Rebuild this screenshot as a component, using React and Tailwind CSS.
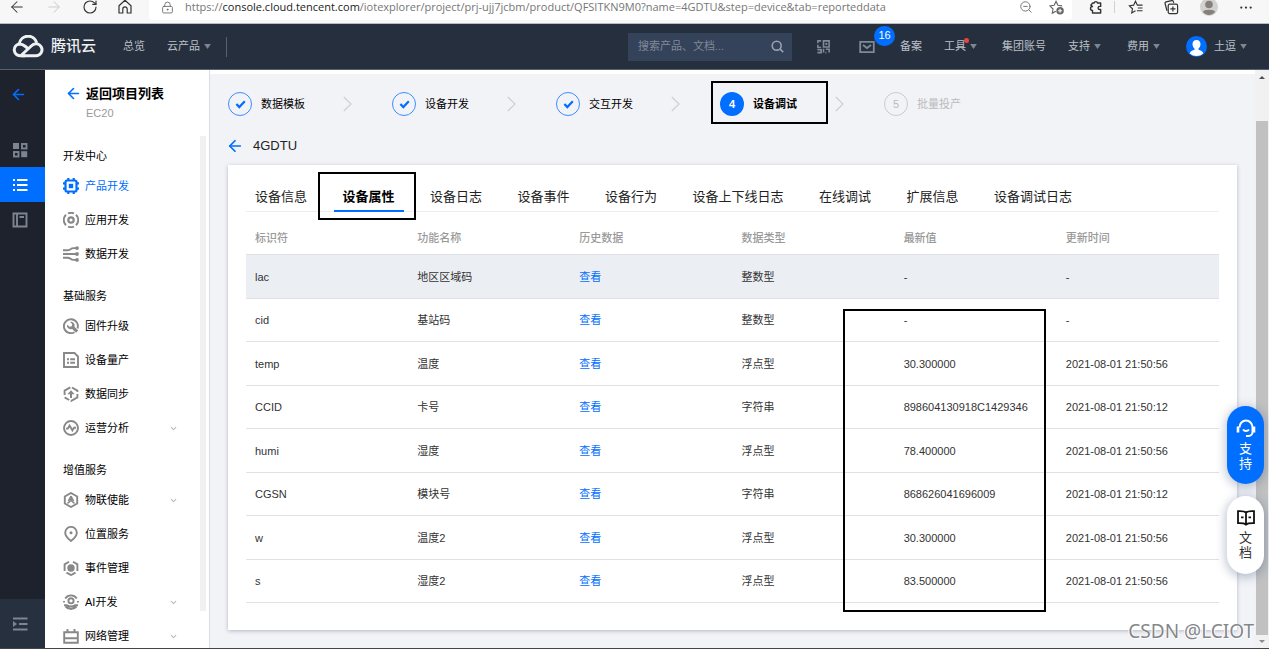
import React from "react";
import {
  ArrowLeft,
  ArrowRight,
  ChevronDown,
  RotateCw,
  LockKeyhole,
  ZoomOut,
} from "lucide-react";

function Svg({ size = 16, className = "", children, ...rest }) {
  return (
    <svg
      width={size}
      height={size}
      viewBox="0 0 16 16"
      fill="none"
      stroke="currentColor"
      strokeWidth="1.9"
      className={"shrink-0 " + className}
      aria-hidden="true"
      {...rest}
    >
      {children}
    </svg>
  );
}

const Dot = ({ x, y, r = 1.3 }) => <circle cx={x} cy={y} r={r} fill="currentColor" stroke="none" />;

const sideIcons = {
  chip: (
    <>
      <rect x="2.5" y="2.5" width="11" height="11" rx="1.5" strokeWidth="2.2" />
      <rect x="5.800" y="5.800" width="4.400" height="4.400" fill="currentColor" stroke="none" />
      <path d="M5.3 0v2M10.7 0v2M5.3 14v2M10.7 14v2M0 5.3h2M0 10.7h2M14 5.3h2M14 10.7h2" strokeWidth="2.200" />
    </>
  ),
  app: (
    <>
      <circle cx="8" cy="8" r="2.700" strokeWidth="2.200" />
      <path d="M5 1.500a7.200 7.200 0 0 1 6 0M5 14.500a7.200 7.200 0 0 0 6 0M3 2.800a7.200 7.200 0 0 0 0 10.400M13 2.800a7.200 7.200 0 0 1 0 10.400" />
    </>
  ),
  flow: (
    <>
      <path d="M0 4.300h4.500c3 0 3-2.200 6-2.200H14M0 8h14M0 11.700h4.500c3 0 3 2.200 6 2.200H14" />
      <Dot x={14} y={2.1} r={1.9} />
      <Dot x={14} y={8} r={1.9} />
      <Dot x={14} y={13.9} r={1.9} />
    </>
  ),
  wrench: (
    <>
      <path d="M11.500 14.200A7 7 0 1 1 14.500 10.500" />
      <path d="M7 3.900a3.800 3.800 0 0 1 4.500 4.900l3.700 3.800-2.200 2.200-3.900-3.800a3.800 3.800 0 0 1-5-4.500l2.400 2.200 2.300-.4.400-2.200z" fill="currentColor" stroke="none" />
    </>
  ),
  batch: (
    <>
      <path d="M1 1h10.500L15 4.500V15H1z" />
      <path d="M4 7.200h2M7.200 7.200H12M4 10.800h2M7.200 10.800H12" />
    </>
  ),
  sync: (
    <>
      <path d="M1.600 9V4.600L8 1l6.400 3.600V6M14.400 8v3.400L8 15l-6.400-3.600" strokeDasharray="11 1.800" />
      <path d="M8 12V6" strokeWidth="2" />
      <path d="M4.400 8.200 8 4.200l3.600 4z" fill="currentColor" stroke="none" />
    </>
  ),
  pulse: (
    <>
      <circle cx="8" cy="8" r="7" />
      <path d="M3 8.600h1.800l1.800-3 2.800 4.800 1.600-2.600h2" />
    </>
  ),
  hexA: (
    <>
      <path d="M8 1l6.200 3.500v7L8 15l-6.200-3.500v-7z" />
      <path d="M8 4v4.500l-3.500 2.800M8 8.500l3.500 2.800M8 4.200l-2.600 5M8 4.200l2.600 5" strokeWidth="1.500" />
    </>
  ),
  pin: (
    <>
      <path d="M8 15S2.200 10.500 2.200 6.700a5.800 5.800 0 0 1 11.600 0C13.800 10.500 8 15 8 15z" />
      <Dot x={8} y={6.700} r={1.500} />
    </>
  ),
  event: (
    <>
      <circle cx="8" cy="8" r="3.700" fill="currentColor" stroke="none" />
      <path d="M6 1.800 1.600 4.400V11M10 1.800l4.400 2.600V11M3.500 12.600 8 15l4.500-2.400" />
    </>
  ),
  ai: (
    <>
      <path d="M2.200 4.500a7 7 0 0 1 11.600 0M1 7v1.500M15 7v1.500M1 11.200h3c2 1.800 6 1.800 8 0h3M2.500 12.500c3 3.300 8 3.300 11 0" />
      <circle cx="8" cy="6.800" r="2.600" />
    </>
  ),
  net: (
    <>
      <path d="M1.200 4.200h13.600v10.600H1.200zM1.200 10.300h13.600M4.500 1v3M11.500 1v3" />
    </>
  ),
};

const groups = [
  {
    title: "开发中心",
    items: [
      { icon: "chip", label: "产品开发", active: true },
      { icon: "app", label: "应用开发" },
      { icon: "flow", label: "数据开发" },
    ],
  },
  {
    title: "基础服务",
    items: [
      { icon: "wrench", label: "固件升级" },
      { icon: "batch", label: "设备量产" },
      { icon: "sync", label: "数据同步" },
      { icon: "pulse", label: "运营分析", more: true },
    ],
  },
  {
    title: "增值服务",
    items: [
      { icon: "hexA", label: "物联使能", more: true },
      { icon: "pin", label: "位置服务" },
      { icon: "event", label: "事件管理" },
      { icon: "ai", label: "AI开发", more: true },
      { icon: "net", label: "网络管理", more: true },
    ],
  },
];

const tabs = [
  "设备信息",
  "设备属性",
  "设备日志",
  "设备事件",
  "设备行为",
  "设备上下线日志",
  "在线调试",
  "扩展信息",
  "设备调试日志",
];

const steps = ["数据模板", "设备开发", "交互开发", "设备调试", "批量投产"];

const columns = ["标识符", "功能名称", "历史数据", "数据类型", "最新值", "更新时间"];

const rows = [
  ["lac", "地区区域码", "整数型", "-", "-"],
  ["cid", "基站码", "整数型", "-", "-"],
  ["temp", "温度", "浮点型", "30.300000", "2021-08-01 21:50:56"],
  ["CCID", "卡号", "字符串", "898604130918C1429346", "2021-08-01 21:50:12"],
  ["humi", "湿度", "浮点型", "78.400000", "2021-08-01 21:50:56"],
  ["CGSN", "模块号", "字符串", "868626041696009", "2021-08-01 21:50:12"],
  ["w", "温度2", "浮点型", "30.300000", "2021-08-01 21:50:56"],
  ["s", "湿度2", "浮点型", "83.500000", "2021-08-01 21:50:56"],
];

function Caret() {
  return (
    <svg width="7" height="5" viewBox="0 0 8 6" className="shrink-0 text-[#7f868f]" aria-hidden="true">
      <path d="M0 0h8L4 6z" fill="currentColor" />
    </svg>
  );
}

function BrowserBar() {
  return (
    <div className="flex h-6 shrink-0 items-start border-b border-[#b9bec2] bg-[#f7f7f7] text-[#333]">
      <div className="flex h-[14px] items-center gap-[19px] pl-2">
        <button aria-label="后退"><ArrowLeft size={18} strokeWidth={1.4} /></button>
        <button aria-label="前进" className="text-[#cfcfcf]"><ArrowRight size={18} strokeWidth={1.4} /></button>
        <button aria-label="刷新"><RotateCw size={16} strokeWidth={1.700} /></button>
        <button aria-label="主页">
          <Svg size={16} strokeWidth="1.200">
            <path d="M2 6.700 8 1.200l6 5.500V14h-3.800v-4a2.200 2.200 0 0 0-4.400 0v4H2z" />
          </Svg>
        </button>
      </div>
      <div className="ml-4 flex h-5 min-w-0 flex-1 items-start rounded-b bg-white">
        <div className="flex h-[14px] w-full min-w-0 items-center pl-3 pr-2">
          <LockKeyhole size={13} strokeWidth={1.7} className="shrink-0 text-[#707070]" />
          <a
            href="#address"
            className="ml-[11px] truncate font-['Open_Sans','Noto_Sans',sans-serif] text-[11px] leading-[14px] text-[#767676]"
          >
            https://<span className="text-[#1c1c1c]">console.cloud.tencent.com</span>
            /iotexplorer/project/prj-ujj7jcbm/product/QFSITKN9M0?name=4GDTU&amp;step=device&amp;tab=reporteddata
          </a>
          <div className="ml-auto flex shrink-0 items-center gap-4">
            <button aria-label="缩小" className="text-[#777]"><ZoomOut size={14} strokeWidth={1.7} /></button>
            <button aria-label="收藏" className="text-[#666]">
              <Svg size={15} strokeWidth="1.2">
                <path d="M7.500 12 3.500 14l.8-4.400L1 6.400l4.500-.7 2-4.200 2 4.200 4.500.6" />
                <circle cx="11.800" cy="11.500" r="4" fill="currentColor" stroke="none" />
                <path d="M11.800 9.300v4.400M9.600 11.500H14" stroke="#fff" />
              </Svg>
            </button>
          </div>
        </div>
      </div>
      <div className="flex h-[14px] items-center pl-4 pr-4">
        <button aria-label="扩展">
          <Svg size={15} strokeWidth="1.500">
            <path d="M5 3.200h1.500a1.900 1.900 0 0 1 3.700 0h3.300v3.600h-1a1.700 1.700 0 0 0 0 3.400h1v3.600H4.800v-2.600a2.100 2.100 0 1 1 0-4.200L3 5.500z" strokeLinejoin="round" />
          </Svg>
        </button>
        <span className="ml-[11px] h-3 w-px bg-[#d0d0d0]" />
        <button aria-label="收藏夹" className="ml-[13px]">
          <Svg size={15} strokeWidth="1.2">
            <path d="M8 11.500 4 13.800l.8-4.500L1.500 6.200 6 5.500l2-4.200 2 4.200h5.500M10.500 8.500h5M9.500 11.500h6" />
          </Svg>
        </button>
        <button aria-label="集锦" className="ml-[21px]">
          <Svg size={15} strokeWidth="1.300">
            <path d="M3.200 11.500 1.200 4a1.500 1.500 0 0 1 1-2l6-1.400a1.500 1.500 0 0 1 1.800 1.200l.3 1.200" />
            <rect x="4.500" y="4.500" width="10" height="10" rx="1.500" />
            <path d="M9.500 6.800v5.400M6.800 9.500h5.400" />
          </Svg>
        </button>
        <button aria-label="用户" className="ml-[21px]">
          <svg width="18" height="18" viewBox="0 0 18 18" aria-hidden="true">
            <circle cx="9" cy="9" r="9" fill="#d3d1ce" />
            <circle cx="9" cy="6.500" r="3.800" fill="#85807b" />
            <path d="M3 14c0-3 12-3 12 0-3 4-9 4-12 0z" fill="#85807b" />
          </svg>
        </button>
        <button aria-label="更多" className="ml-5">
          <svg width="15" height="15" viewBox="0 0 16 16" fill="currentColor" aria-hidden="true">
            <circle cx="3.500" cy="8" r="1.200" />
            <circle cx="8.500" cy="8" r="1.200" />
            <circle cx="13.500" cy="8" r="1.200" />
          </svg>
        </button>
      </div>
    </div>
  );
}

function Header() {
  return (
    <header className="flex h-[46px] shrink-0 items-center border-b border-[#59616c] bg-[#262f3e] pl-3 pr-[22px] text-[11px] text-[#bbc0c7]">
      <a href="#home" className="flex items-center gap-[7px] text-[15px] font-medium text-[#eef0f2]">
        <svg width="32" height="24" viewBox="0 0 32 24" fill="none" stroke="currentColor" strokeWidth="3" aria-hidden="true">
          <path d="M13 20.800H8a6 6 0 0 1-.8-11.900 9 9 0 0 1 17.600-1" />
          <path d="M6 9c3-.5 5 .3 7.500 2.500l3 2.700" />
          <path d="M9.500 20.800H24a6 6 0 1 0-4.500-10L9 20.500" />
        </svg>
        腾讯云
      </a>
      <nav className="ml-[27px] flex items-center gap-[22px]">
        <a href="#overview">总览</a>
        <button className="flex items-center gap-1">云产品 <Caret /></button>
      </nav>
      <span className="ml-[15px] h-5 w-px bg-[#566070]" />
      <div className="ml-auto flex items-center">
        <label className="flex h-7 w-[164px] items-center bg-[#34425a] px-2">
          <input
            type="search"
            aria-label="搜索"
            placeholder="搜索产品、文档..."
            className="min-w-0 flex-1 bg-transparent pl-[2px] text-[11px] outline-none placeholder:text-[#808a98]"
          />
          <Svg size={13} className="text-[#98a1ad]" strokeWidth="2">
            <circle cx="7" cy="7" r="5.500" />
            <path d="m11 11 4 4" />
          </Svg>
        </label>
        <button aria-label="小程序" className="ml-6 text-[#7f8a99]">
          <Svg size={15} strokeWidth="1.700">
            <path d="M5.500 2H2v2.500M2 6v3h3.500M8 2h6v6.500H8zM1.500 11.500h4v3h-4M8 10.500v4M10.500 11h3.500v3.500M11 14.500h-1" />
            <Dot x={11} y={5.200} r={1.200} />
          </Svg>
        </button>
        <button aria-label="消息" className="relative ml-7 text-[#7f8a99]">
          <Svg size={16} strokeWidth="1.800">
            <path d="M1.200 2.800h13.600v10.400H1.200zM4 6l4 3 4-3" />
          </Svg>
          <span className="absolute -top-[13px] left-[15px] flex h-5 w-[21px] items-center justify-center rounded-full bg-[#006eff] text-[11px] text-white">
            16
          </span>
        </button>
        <a href="#beian" className="ml-[25px]">备案</a>
        <button className="relative ml-[22px] flex items-center gap-1">
          工具 <Caret />
          <span className="absolute left-5 top-0 h-[5px] w-[5px] rounded-full bg-[#e54545]" />
        </button>
        <a href="#account" className="ml-[25px]">集团账号</a>
        <button className="ml-[22px] flex items-center gap-1">支持 <Caret /></button>
        <button className="ml-[26px] flex items-center gap-1">费用 <Caret /></button>
        <button className="ml-[26px] flex items-center gap-1">
          <svg width="21" height="21" viewBox="0 0 21 21" className="mr-[3px]" aria-hidden="true">
            <circle cx="10.500" cy="10.500" r="10.500" fill="#006eff" />
            <path d="M10.500 4c-2.800 0-4 2-4 4.200 0 2 .9 3.300 2 4.200v1.400c-2 .8-4.300 1.200-4.800 3.800a10.500 10.500 0 0 0 13.600 0c-.5-2.600-2.800-3-4.800-3.800v-1.400c1.100-.9 2-2.200 2-4.200 0-2.200-1.200-4.200-4-4.200z" fill="#fff" />
          </svg>
          土逗 <Caret />
        </button>
      </div>
    </header>
  );
}

function Rail() {
  return (
    <aside className="flex w-[45px] shrink-0 flex-col bg-[#1e222d] text-[#7c8591]">
      <button aria-label="返回" className="flex h-12 items-center pl-[10px] text-[#006eff]">
        <ArrowLeft size={17} strokeWidth={2.3} />
      </button>
      <button aria-label="控制台" className="mt-[14px] flex h-[35px] items-center pl-3">
        <Svg size={16}>
          <rect x="1" y="1" width="6" height="6" fill="currentColor" stroke="none" />
          <rect x="10" y="2" width="4.500" height="4.500" />
          <rect x="2" y="10" width="4.500" height="4.500" />
          <rect x="9.200" y="9.200" width="6" height="6" fill="currentColor" stroke="none" />
        </Svg>
      </button>
      <button aria-label="列表" className="flex h-[35px] items-center bg-[#006eff] pl-3 text-white">
        <Svg size={16} strokeWidth="1.900">
          <path d="M1 3h2M5 3h10.500M1 8h2M5 8h10.500M1 13h2M5 13h10.500" />
        </Svg>
      </button>
      <button aria-label="文档" className="flex h-[35px] items-center pl-3">
        <Svg size={16}>
          <path d="M1.500 1.500h13v13h-13zM5 1.500v13M7.500 5H12" />
        </Svg>
      </button>
      <button aria-label="展开菜单" className="mt-auto flex h-[49px] items-center bg-[#27303f] pl-3">
        <Svg size={16}>
          <path d="M1 2.500h14.500M7 8h8.500M1 13.500h14.500" />
          <path d="M1 5v6l4-3z" fill="currentColor" stroke="none" />
        </Svg>
      </button>
    </aside>
  );
}

function Sidebar() {
  return (
    <aside className="flex w-[165px] shrink-0 flex-col border-r border-[#d9dce3] bg-white text-[11px] text-black">
      <div className="flex items-start gap-1 pl-5 pt-[15px]">
        <a href="#projects" aria-label="返回项目列表" className="text-[#006eff]">
          <ArrowLeft size={17} strokeWidth={2.300} />
        </a>
        <div>
          <h2 className="text-[13px] font-bold leading-[18px]">返回项目列表</h2>
          <p className="text-[11px] leading-[20px] text-[#999]">EC20</p>
        </div>
      </div>
      <div className="mt-[13px] flex min-h-0 flex-1">
        <nav className="flex min-w-0 flex-1 flex-col gap-3 overflow-hidden pl-[18px] pt-[7px]">
          {groups.map((g) => (
            <section key={g.title}>
              <h3 className="h-[26px] leading-[27px]">{g.title}</h3>
              <ul>
                {g.items.map((it) => (
                  <li key={it.label}>
                    <a
                      href={"#" + it.icon}
                      className={"flex h-[34px] items-center gap-[6px] pr-[22px] " + (it.active ? "text-[#006eff]" : "")}
                    >
                      <Svg size={16} className={it.active ? "text-[#006eff]" : "text-[#888]"}>
                        {sideIcons[it.icon]}
                      </Svg>
                      {it.label}
                      {it.more && <ChevronDown size={9} strokeWidth={3} className="ml-auto text-[#bbb]" />}
                    </a>
                  </li>
                ))}
              </ul>
            </section>
          ))}
        </nav>
        <div className="mb-[37px] mr-[3px] w-[6px] shrink-0 bg-[#f1f1f1]" />
      </div>
    </aside>
  );
}

function Steps() {
  return (
    <ol className="flex pt-[18px] text-[11px] text-black">
      {steps.map((label, i) => (
        <li key={label} className="flex items-center">
          <div className="relative flex items-center gap-[9px]">
            {i < 3 && (
              <span className="flex h-6 w-6 items-center justify-center rounded-full border border-[#3d8dff] text-[#006eff]">
                <svg width="11" height="11" viewBox="0 0 12 12" fill="none" stroke="currentColor" strokeWidth="2.400" aria-hidden="true">
                  <path d="m1.500 5.500 3.200 3.300 6-6.300" />
                </svg>
              </span>
            )}
            {i === 3 && (
              <span className="flex h-6 w-6 items-center justify-center rounded-full bg-[#006eff] font-bold text-white">4</span>
            )}
            {i === 4 && (
              <span className="flex h-6 w-6 items-center justify-center rounded-full border border-[#c9cbd0] text-[#bbb]">5</span>
            )}
            <span className={i === 3 ? "font-bold" : i === 4 ? "text-[#bbb]" : ""}>{label}</span>
            {i === 3 && (
              <span className="pointer-events-none absolute -bottom-2 -left-[9px] -right-[31px] -top-[11px] border-2 border-black" />
            )}
          </div>
          {i < 4 && (
            <svg width="9" height="16" viewBox="0 0 9 16" fill="none" stroke="#cfcfcf" strokeWidth="1.200" className="ml-[38px] mr-10" aria-hidden="true">
              <path d="m.8 1 7.200 7-7.200 7" />
            </svg>
          )}
        </li>
      ))}
    </ol>
  );
}

function Tabs() {
  return (
    <div className="border-b border-[#eceef1] pl-[9px]">
      <div role="tablist" className="flex max-w-[817px] justify-between text-[13px] text-[#222]">
        {tabs.map((t, i) => (
          <button
            key={t}
            role="tab"
            aria-selected={i === 1}
            className={"relative h-[30px] whitespace-nowrap pt-[2px] " + (i === 1 ? "font-bold text-black" : "")}
          >
            {t}
            {i === 1 && (
              <>
                <span className="absolute -bottom-px -left-2 -right-[9px] h-[2px] bg-[#006eff]" />
                <span className="pointer-events-none absolute -bottom-[9px] -left-6 -right-[21px] -top-[9px] border-2 border-black" />
              </>
            )}
          </button>
        ))}
      </div>
    </div>
  );
}

function DataTable() {
  return (
    <div className="relative">
      <table className="w-full table-fixed border-collapse text-left text-[11px] text-[#333]">
        <thead>
          <tr className="h-[42px] border-b border-[#dfe1e6] text-[#999]">
            {columns.map((c) => (
              <th key={c} className="pb-0 pl-[9px] pt-[10px] font-medium">{c}</th>
            ))}
          </tr>
        </thead>
        <tbody>
          {rows.map((r, i) => (
            <tr
              key={r[0]}
              className={
                "h-11 border-b border-[#dfe1e6] even:h-[43px] last:h-11 [&>td]:pb-0 [&>td]:pl-[9px] [&>td]:pt-[2px] " +
                (i === 0 ? "bg-[#ebeef2]" : "")
              }
            >
              <td>{r[0]}</td>
              <td>{r[1]}</td>
              <td><a href={"#" + r[0]} className="text-[#006eff]">查看</a></td>
              <td>{r[2]}</td>
              <td>{r[3]}</td>
              <td>{r[4]}</td>
            </tr>
          ))}
        </tbody>
      </table>
      <span className="pointer-events-none absolute -bottom-[9px] left-[597px] top-[97px] w-[203px] border-2 border-black" />
    </div>
  );
}

function PageScrollbar() {
  return (
    <div className="flex w-[14px] shrink-0 flex-col items-center bg-[#f1f1f1]">
      <svg width="14" height="14" viewBox="0 0 14 14" aria-hidden="true"><path d="M4 9h6L7 6z" fill="#505050" /></svg>
      <div className="mt-[37px] w-3 flex-1 bg-[#c1c1c1]" />
      <svg width="14" height="13" viewBox="0 0 14 13" aria-hidden="true"><path d="M4 5h6L7 8z" fill="#8a8a8a" /></svg>
    </div>
  );
}

function FloatingActions() {
  return (
    <div className="absolute bottom-[74px] right-[5px] flex flex-col gap-3 text-[13px] leading-[15px]">
      <button className="flex h-[78px] w-[37px] flex-col items-center rounded-full bg-[#006eff] pt-3 text-white shadow-[0_2px_10px_2px_rgba(54,75,120,0.3)]">
        <svg width="20" height="20" viewBox="0 0 20 20" fill="none" stroke="currentColor" strokeWidth="2" aria-hidden="true">
          <path d="M3.500 9.500a6.500 7 0 0 1 13 0V14a4 4 0 0 1-4 4H10" />
          <path d="M2 8.500v6M18 8.500v6" strokeWidth="2.600" />
          <path d="M7 11.500c1.500 2 4.500 2 6 0" />
        </svg>
        <span className="mt-[3px] w-[13px]">支持</span>
      </button>
      <button className="flex h-[78px] w-[37px] flex-col items-center rounded-full bg-white pt-3 text-[#333] shadow-[0_2px_10px_2px_rgba(54,75,120,0.3)]">
        <svg width="20" height="20" viewBox="0 0 20 20" fill="none" stroke="#111" strokeWidth="1.800" aria-hidden="true">
          <path d="M10 4.500C8.500 3 6 3 2 3.200v12c3.500 0 6-.2 8 1.300 2-1.500 4.500-1.300 8-1.300v-12c-4-.2-6.500-.2-8 1.300zM10 4.500v13M5 9.300h2.500M12.500 9.300H15" />
        </svg>
        <span className="mt-[2px] w-[13px]">文档</span>
      </button>
    </div>
  );
}

export default function App() {
  return (
    <div className="flex h-screen flex-col overflow-hidden border-b border-[#444] font-['Liberation_Sans','Noto_Sans_CJK_SC',sans-serif]">
      <BrowserBar />
      <Header />
      <div className="relative flex min-h-0 flex-1">
        <Rail />
        <Sidebar />
        <main className="min-w-0 flex-1 overflow-hidden border-t-4 border-white bg-[#f2f3f7] pl-[18px] pr-[18px]">
          <Steps />
          <div className="flex items-center gap-[9px] pb-[10px] pt-[21px] text-[13px] leading-[18px] text-[#222]">
            <a href="#products" aria-label="返回" className="-ml-[2px] text-[#006eff]">
              <ArrowLeft size={18} strokeWidth={2.300} />
            </a>
            <h1>4GDTU</h1>
          </div>
          <section className="bg-white px-[18px] pb-[27px] pt-4 shadow-[0_1px_4px_rgba(54,58,80,0.32)]">
            <Tabs />
            <DataTable />
          </section>
        </main>
        <PageScrollbar />
        <FloatingActions />
        <div className="pointer-events-none absolute bottom-[5px] right-[15px] font-['Noto_Sans',sans-serif] text-[19px] leading-6 text-[#85878b] [text-shadow:1px_1px_0_#fff,-1px_0_0_#fff]">
          CSDN @LCIOT
        </div>
      </div>
    </div>
  );
}
